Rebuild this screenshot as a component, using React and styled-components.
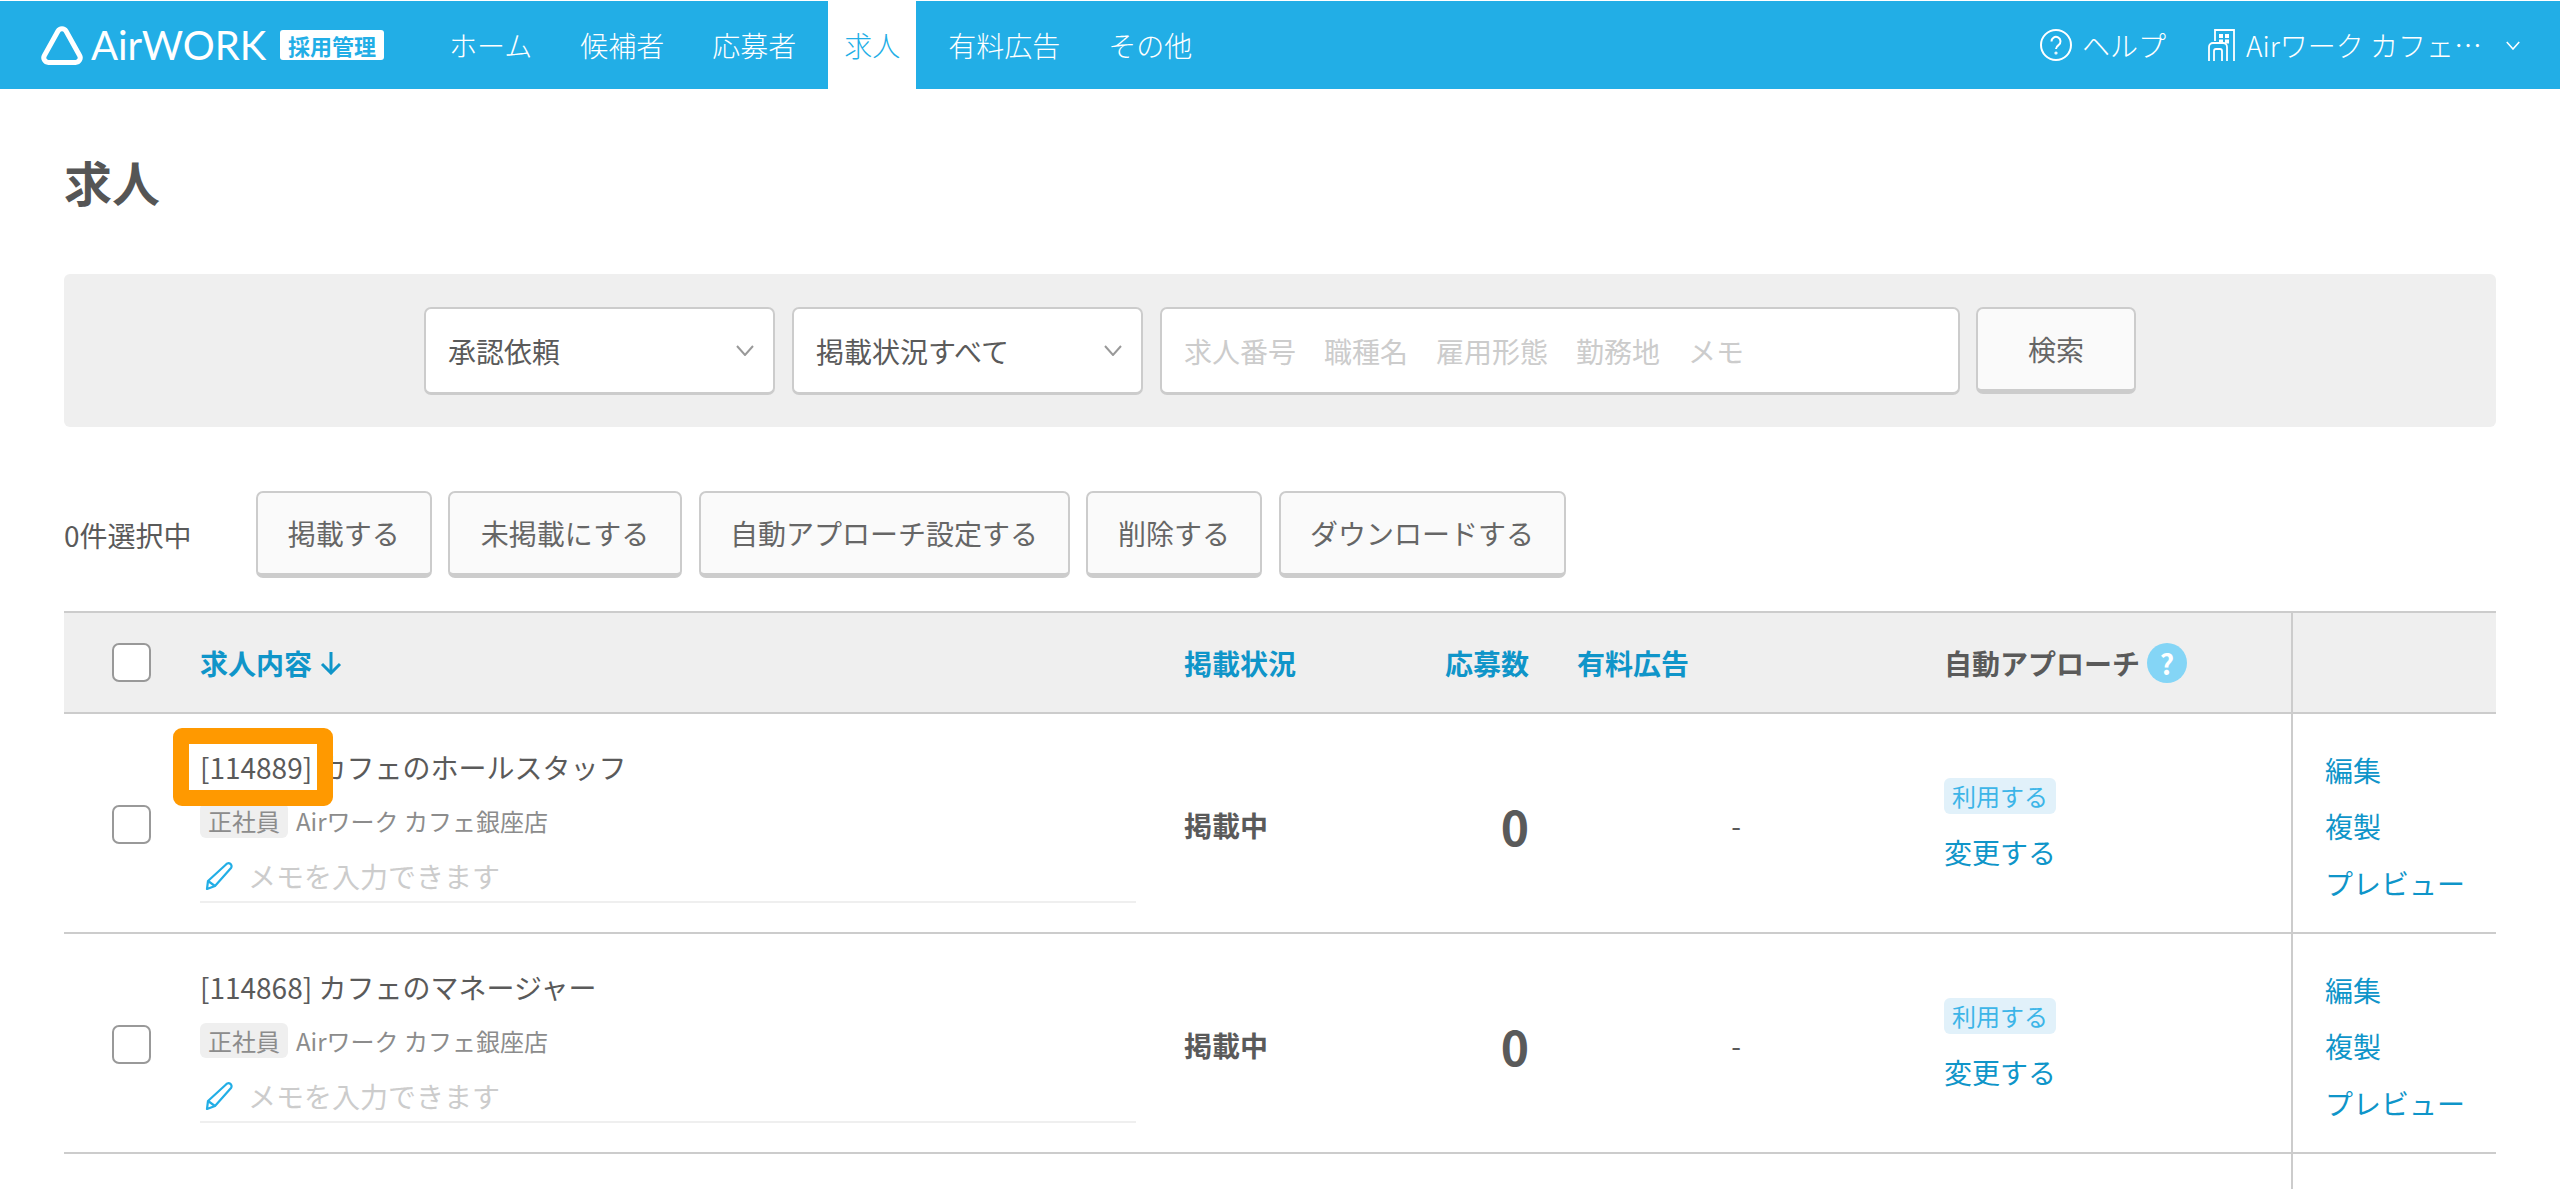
import React from 'react';
import styled, { createGlobalStyle } from 'styled-components';

const GlobalStyle = createGlobalStyle`
  html, body { margin: 0; padding: 0; background: #fff; }
  body {
    font-family: 'Noto Sans CJK JP', 'Noto Sans', sans-serif;
    color: #5a5a5a;
    font-size: 28px;
  }
  * { box-sizing: border-box; }
`;

const Page = styled.div`
  height: 1189px;
  overflow: hidden;
  padding-top: 1px;
`;

const Header = styled.header`
  height: 88px;
  background: #22aee6;
  display: flex;
  align-items: stretch;
  color: #fff;
  font-weight: 300;
`;

const LogoWrap = styled.div`
  display: flex;
  align-items: center;
  margin-left: 40px;
  width: 393px;
`;

const LogoText = styled.span`
  font-family: 'Lato', sans-serif;
  font-size: 40px;
  font-weight: 400;
  line-height: 1;
  width: 175px;
  margin-left: 7px;
  white-space: nowrap;
`;

const LogoBadge = styled.span`
  margin-left: 14px;
  width: 104px;
  height: 30px;
  background: #fff;
  color: #22aee6;
  border-radius: 3px;
  font-size: 22px;
  font-weight: 700;
  line-height: 30px;
  text-align: center;
`;

const Nav = styled.nav`
  display: flex;
  gap: 16px;
`;

const NavItem = styled.a`
  display: flex;
  align-items: center;
  padding: 0 16px;
  color: ${(p) => (p.$active ? '#22aee6' : '#fff')};
  background: ${(p) => (p.$active ? '#fff' : 'transparent')};
`;

const HeaderRight = styled.div`
  margin-left: auto;
  display: flex;
  align-items: center;
`;

const HelpLink = styled.span`
  display: flex;
  align-items: center;
  gap: 10px;
  margin-right: 42px;
`;

const Shop = styled.span`
  display: flex;
  align-items: center;
  gap: 11px;
  margin-right: 40px;
`;

const ShopName = styled.span`
  width: 249px;
  white-space: nowrap;
`;

const Main = styled.main`
  padding: 56px 64px 0;
`;

const Title = styled.h1`
  margin: 0;
  font-size: 48px;
  line-height: 72px;
  font-weight: 700;
  color: #555;
`;

const SearchPanel = styled.section`
  margin-top: 57px;
  height: 153px;
  background: #efefef;
  border-radius: 6px;
  display: flex;
  justify-content: center;
  align-items: flex-start;
  padding-top: 33px;
`;

const SelectBox = styled.div`
  width: 351px;
  height: 88px;
  margin-right: 17px;
  padding: 0 19px 0 22px;
  background: #fff;
  border: 2px solid #ccc;
  border-bottom-width: 3px;
  border-radius: 7px;
  display: flex;
  align-items: center;
  justify-content: space-between;
`;

const SearchInput = styled.div`
  width: 800px;
  height: 88px;
  margin-right: 16px;
  padding: 0 22px;
  background: #fff;
  border: 2px solid #ccc;
  border-bottom-width: 3px;
  border-radius: 7px;
  display: flex;
  align-items: center;
  color: #ccc;
`;

const Button = styled.button`
  height: 87px;
  width: ${(p) => p.$width}px;
  padding: 0;
  background: #fafafa;
  border: 2px solid #ccc;
  border-bottom-width: 5px;
  border-radius: 7px;
  color: #666;
  font: inherit;
  font-size: 28px;
`;

const ActionRow = styled.div`
  margin-top: 64px;
  display: flex;
  align-items: center;
`;

const SelectedCount = styled.span`
  width: 192px;
`;

const ActionButtons = styled.div`
  display: flex;
  gap: 16.5px;
`;

const Table = styled.div`
  margin-top: 33px;
`;

const columns = '136px 984px 261px 132px 369px 345px 205px';

const HeadRow = styled.div`
  display: grid;
  grid-template-columns: ${columns};
  height: 103px;
  align-items: center;
  background: #efefef;
  border-top: 2px solid #ccc;
  border-bottom: 2px solid #ccc;
  font-weight: 700;
`;

const Row = styled.div`
  display: grid;
  grid-template-columns: ${columns};
  height: ${(p) => p.$height || 220}px;
  padding-top: ${(p) => (p.$open ? 0 : 3)}px;
  align-items: center;
  border-bottom: ${(p) => (p.$open ? 'none' : '2px solid #ccc')};
`;

const CheckCell = styled.div`
  padding-left: 48px;
`;

const Checkbox = styled.span`
  display: block;
  width: 39px;
  height: 39px;
  background: #fff;
  border: 2px solid #999;
  border-radius: 7px;
`;

const SortLink = styled.span`
  color: #0f95c9;
  display: flex;
  align-items: center;
  gap: 8px;
`;

const HeadText = styled.span`
  display: flex;
  align-items: center;
  gap: 7px;
  margin-left: -2px;
`;

const QuestionMark = styled.span`
  width: 40px;
  height: 40px;
  border-radius: 50%;
  background: #84d5f6;
  color: #fff;
  font-size: 28px;
  font-weight: 700;
  line-height: 40px;
  text-align: center;
`;

const ActionCell = styled.div`
  align-self: stretch;
  margin-top: ${(p) => (p.$flush ? -3 : 0)}px;
  padding: ${(p) => (p.$flush ? 6 : 0)}px 0 0 32px;
  border-left: 2px solid #ccc;
  display: flex;
  flex-direction: column;
  justify-content: center;
  gap: 16.5px;
`;

const JobCell = styled.div`
  padding-right: 48px;
`;

const JobTitle = styled.div`
  position: relative;
  line-height: 40px;
`;

const Highlight = styled.span`
  position: absolute;
  left: -27px;
  top: -19px;
  width: 160px;
  height: 78px;
  border: 16px solid #ff9900;
  border-radius: 9px;
`;

const JobMeta = styled.div`
  margin-top: 16px;
  display: flex;
  align-items: center;
  gap: 8px;
  font-size: 24px;
  color: #8c8c8c;
`;

const Tag = styled.span`
  width: 88px;
  height: 35px;
  background: #efefef;
  border-radius: 6px;
  line-height: 35px;
  text-align: center;
`;

const Memo = styled.div`
  margin-top: 18px;
  padding-bottom: 5px;
  border-bottom: 2px solid #efefef;
  display: flex;
  align-items: center;
  gap: 14px;
  padding-left: 5px;
  line-height: 40px;
  color: #ccc;
`;

const StatusText = styled.span`
  font-weight: 700;
`;

const CountCell = styled.div`
  width: 84px;
  text-align: right;
  font-size: 48px;
  font-weight: 700;
  line-height: 1;
`;

const AdCell = styled.div`
  padding-right: 51px;
  text-align: center;
`;

const ApproachCell = styled.div`
  display: flex;
  flex-direction: column;
  align-items: flex-start;
  gap: 18px;
  margin-left: -2px;
`;

const UseBadge = styled.span`
  width: 112px;
  height: 36px;
  background: #e1f1fa;
  border-radius: 6px;
  color: #3cb5e8;
  font-size: 24px;
  line-height: 36px;
  text-align: center;
`;

const TextLink = styled.a`
  color: #0f95c9;
  line-height: 40px;
`;

const Chevron = ({ color = '#999', width = 18, height = 11 }) => (
  <svg width={width} height={height} viewBox="0 0 18 11" fill="none">
    <polyline points="1,1 9,10 17,1" stroke={color} strokeWidth="2" />
  </svg>
);

const LogoMark = () => (
  <svg width="44" height="40" viewBox="0 0 44 40" fill="none">
    <path
      d="M18 6 a4.6 4.6 0 0 1 8 0 L39.6 30.5 a4.6 4.6 0 0 1 -4 6.9 H8.4 a4.6 4.6 0 0 1 -4 -6.9 Z"
      stroke="#fff"
      strokeWidth="5"
    />
  </svg>
);

const HelpIcon = () => (
  <svg width="32" height="32" viewBox="0 0 32 32" fill="none" stroke="#fff" strokeWidth="2">
    <circle cx="16" cy="16" r="15" />
    <path d="M11.5 12.5 a4.5 4.5 0 1 1 7 3.6 c-1.7 1.2 -2.5 2 -2.5 4" />
    <circle cx="16" cy="24" r="0.6" />
  </svg>
);

const BuildingIcon = () => (
  <svg width="27" height="32" viewBox="0 0 27 32" fill="none" stroke="#fff" strokeWidth="1.8">
    <path d="M26 32 V1 H7 V12" />
    <path d="M1 32 V18 a4 4 0 0 1 4 -4 H15 a4 4 0 0 1 4 4 V32" />
    <path d="M6 32 V22 a2 2 0 0 1 2 -2 H12 a2 2 0 0 1 2 2 V32" />
    <g fill="#fff" stroke="none">
      <rect x="11" y="5" width="4" height="4" />
      <rect x="17" y="5" width="4" height="4" />
      <rect x="11" y="10.5" width="4" height="4" />
      <rect x="17" y="10.5" width="4" height="4" />
    </g>
  </svg>
);

const ArrowDown = () => (
  <svg width="22" height="24" viewBox="0 0 22 24" fill="none" stroke="#0f95c9" strokeWidth="3">
    <path d="M11 1 V22" />
    <path d="M2 13 L11 22 L20 13" />
  </svg>
);

const PencilIcon = () => (
  <svg width="29" height="28" viewBox="0 0 29 28" fill="none" stroke="#22aee6" strokeWidth="2.2" strokeLinejoin="round">
    <path d="M21 2.5 a3 3 0 0 1 5 3.5 L10 24 L2 27 L3 19 Z" />
    <path d="M3 19 L10 24" />
  </svg>
);

const navItems = ['ホーム', '候補者', '応募者', '求人', '有料広告', 'その他'];
const actions = [
  ['掲載する', 175.5],
  ['未掲載にする', 234],
  ['自動アプローチ設定する', 371],
  ['削除する', 176],
  ['ダウンロードする', 287],
];
const jobs = [
  { id: '[114889]', name: 'カフェのホールスタッフ', highlight: true },
  { id: '[114868]', name: 'カフェのマネージャー' },
];

const App = () => {
  return (
    <Page>
      <GlobalStyle />
      <Header>
        <LogoWrap>
          <LogoMark />
          <LogoText>AirWORK</LogoText>
          <LogoBadge>採用管理</LogoBadge>
        </LogoWrap>
        <Nav>
          {navItems.map((item) => (
            <NavItem key={item} $active={item === '求人'}>{item}</NavItem>
          ))}
        </Nav>
        <HeaderRight>
          <HelpLink><HelpIcon />ヘルプ</HelpLink>
          <Shop>
            <BuildingIcon />
            <ShopName>Airワーク カフェ…</ShopName>
            <Chevron color="#fff" width={14} height={9} />
          </Shop>
        </HeaderRight>
      </Header>

      <Main>
        <Title>求人</Title>

        <SearchPanel>
          <SelectBox>承認依頼<Chevron /></SelectBox>
          <SelectBox>掲載状況すべて<Chevron /></SelectBox>
          <SearchInput>求人番号　職種名　雇用形態　勤務地　メモ</SearchInput>
          <Button $width={160}>検索</Button>
        </SearchPanel>

        <ActionRow>
          <SelectedCount>0件選択中</SelectedCount>
          <ActionButtons>
            {actions.map(([label, width]) => (
              <Button key={label} $width={width}>{label}</Button>
            ))}
          </ActionButtons>
        </ActionRow>

        <Table>
          <HeadRow>
            <CheckCell><Checkbox /></CheckCell>
            <SortLink>求人内容<ArrowDown /></SortLink>
            <SortLink>掲載状況</SortLink>
            <SortLink>応募数</SortLink>
            <SortLink>有料広告</SortLink>
            <HeadText>自動アプローチ<QuestionMark>?</QuestionMark></HeadText>
            <ActionCell />
          </HeadRow>
          {jobs.map((job) => (
            <Row key={job.id}>
              <CheckCell><Checkbox /></CheckCell>
              <JobCell>
                <JobTitle>
                  {job.id} {job.name}
                  {job.highlight && <Highlight />}
                </JobTitle>
                <JobMeta><Tag>正社員</Tag>Airワーク カフェ銀座店</JobMeta>
                <Memo><PencilIcon />メモを入力できます</Memo>
              </JobCell>
              <StatusText>掲載中</StatusText>
              <CountCell>0</CountCell>
              <AdCell>-</AdCell>
              <ApproachCell>
                <UseBadge>利用する</UseBadge>
                <TextLink>変更する</TextLink>
              </ApproachCell>
              <ActionCell $flush>
                <TextLink>編集</TextLink>
                <TextLink>複製</TextLink>
                <TextLink>プレビュー</TextLink>
              </ActionCell>
            </Row>
          ))}
          <Row $height={40} $open>
            <span /><span /><span /><span /><span /><span />
            <ActionCell />
          </Row>
        </Table>
      </Main>
    </Page>
  );
};

export default App;
